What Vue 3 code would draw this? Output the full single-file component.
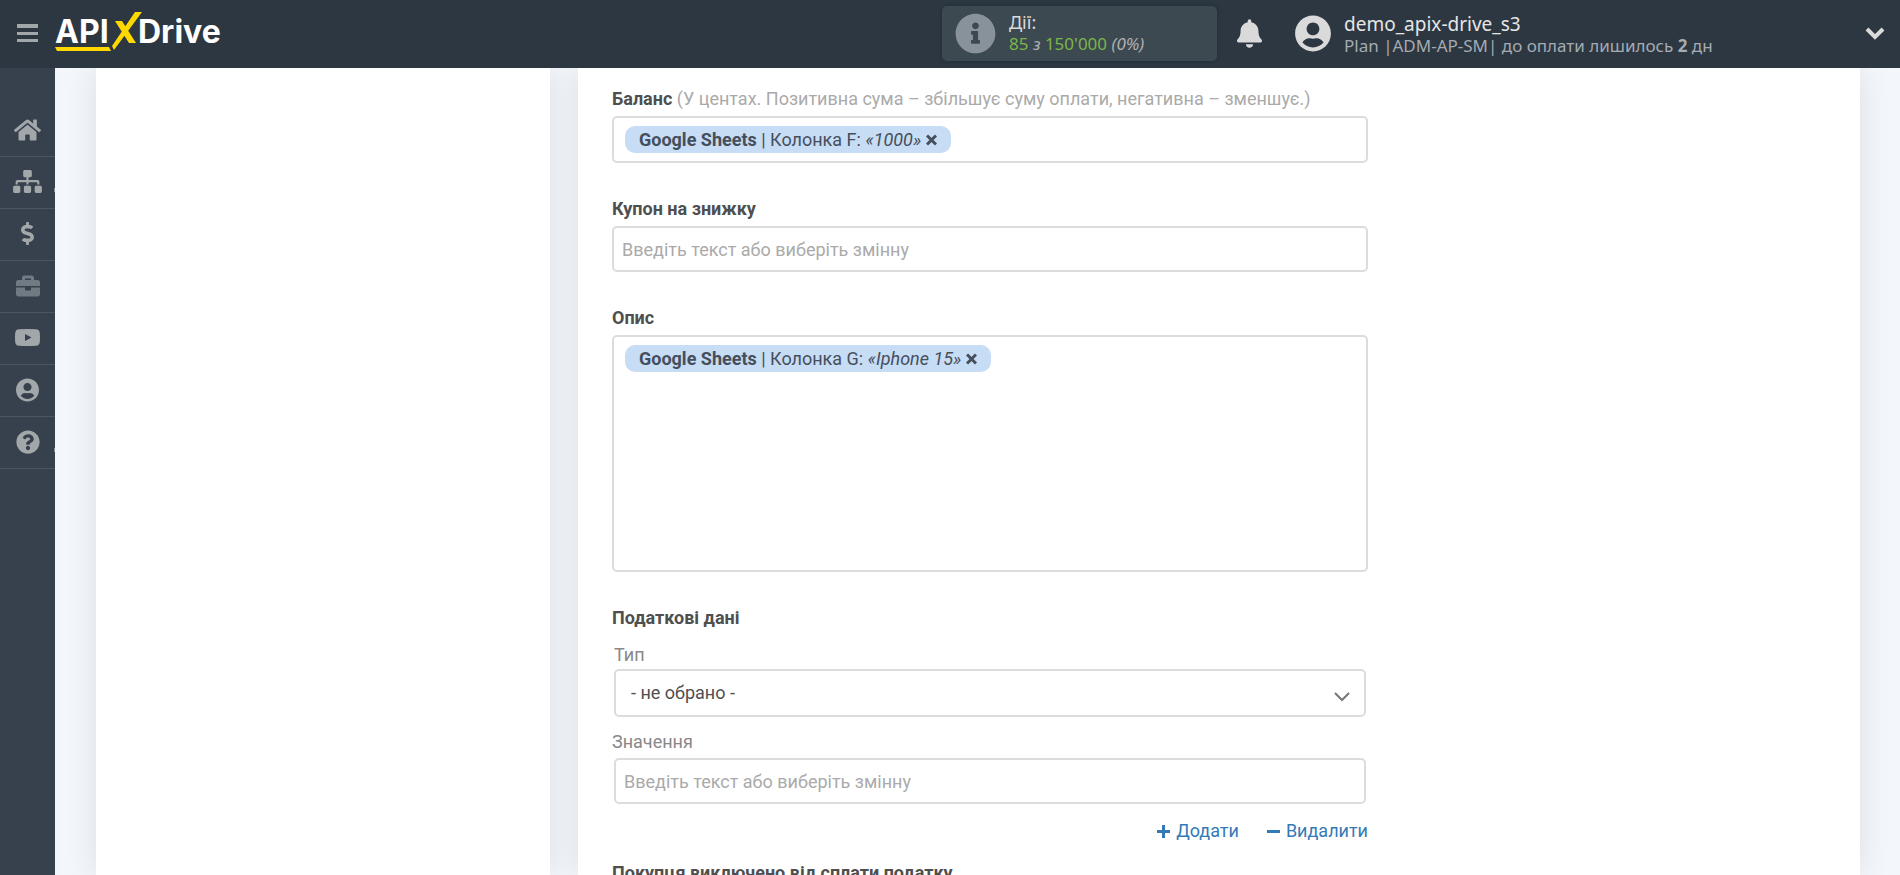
<script setup>
import { ref } from 'vue'

const userPath = 'M248 8C111 8 0 119 0 256s111 248 248 248 248-111 248-248S385 8 248 8zm0 96c48.6 0 88 39.4 88 88s-39.4 88-88 88-88-39.4-88-88 39.4-88 88-88zm0 344c-58.7 0-111.3-26.6-146.5-68.2 18.8-35.4 55.6-59.8 98.5-59.8 2.4 0 4.8.4 7.1 1.1 13 4.2 26.6 6.9 40.9 6.9 14.3 0 28-2.7 40.9-6.9 2.3-.7 4.7-1.1 7.1-1.1 42.9 0 79.7 24.4 98.5 59.8C359.3 421.4 306.7 448 248 448z'

const nav = [
  { name: 'Головна', box: '0 0 576 512', w: 27, h: 24, path: 'M280.37 148.26L96 300.11V464a16 16 0 0 0 16 16l112.06-.29a16 16 0 0 0 15.92-16V368a16 16 0 0 1 16-16h64a16 16 0 0 1 16 16v95.64a16 16 0 0 0 16 16.05L464 480a16 16 0 0 0 16-16V300L295.67 148.26a12.19 12.19 0 0 0-15.3 0zM571.6 251.47L488 182.56V44.05a12 12 0 0 0-12-12h-56a12 12 0 0 0-12 12v72.61L318.47 43a48 48 0 0 0-61 0L4.34 251.47a12 12 0 0 0-1.6 16.9l25.5 31A12 12 0 0 0 45.15 301l235.22-193.74a12.19 12.19 0 0 1 15.3 0L530.9 301a12 12 0 0 0 16.9-1.6l25.5-31a12 12 0 0 0-1.7-16.93z' },
  { name: "Зв'язки", box: '0 0 640 512', w: 29, h: 23, sub: true, path: 'M128 352H32c-17.67 0-32 14.33-32 32v96c0 17.67 14.33 32 32 32h96c17.67 0 32-14.33 32-32v-96c0-17.67-14.33-32-32-32zm-24-80h192v48h48v-48h192v48h48v-57.59c0-21.17-17.23-38.41-38.41-38.41H344v-64h40c17.67 0 32-14.33 32-32V32c0-17.67-14.33-32-32-32H256c-17.67 0-32 14.33-32 32v96c0 17.67 14.33 32 32 32h40v64H94.41C73.23 224 56 241.23 56 262.41V320h48v-48zm264 80h-96c-17.67 0-32 14.33-32 32v96c0 17.67 14.33 32 32 32h96c17.67 0 32-14.33 32-32v-96c0-17.67-14.33-32-32-32zm240 0h-96c-17.67 0-32 14.33-32 32v96c0 17.67 14.33 32 32 32h96c17.67 0 32-14.33 32-32v-96c0-17.67-14.33-32-32-32z' },
  { name: 'Оплата', box: '0 0 288 512', w: 13, h: 23, path: 'M209.2 233.4l-108-31.6C88.7 198.2 80 186.5 80 173.5c0-16.3 13.2-29.5 29.5-29.5h66.3c12.2 0 24.2 3.7 34.2 10.5 6.1 4.1 14.3 3.1 19.5-2l34.8-34c7.1-6.9 6.1-18.4-1.8-24.5C238 74.8 207.4 64.1 176 64V16c0-8.8-7.2-16-16-16h-32c-8.8 0-16 7.2-16 16v48h-2.5C45.8 64-5.4 118.7.5 183.6c4.2 46.1 39.4 83.6 83.8 96.6l102.5 30c12.5 3.7 21.2 15.3 21.2 28.3 0 16.3-13.2 29.5-29.5 29.5h-66.3C100 368 88 364.3 78 357.5c-6.1-4.1-14.3-3.1-19.5 2l-34.8 34c-7.1 6.9-6.1 18.4 1.8 24.5 24.5 19.2 55.1 29.9 86.5 30v48c0 8.8 7.2 16 16 16h32c8.8 0 16-7.2 16-16v-48.2c46.6-.9 90.3-28.6 105.7-72.7 21.5-61.6-14.6-124.8-72.5-141.7z' },
  { name: 'Послуги', box: '0 0 512 512', w: 24, h: 24, dim: true, path: 'M320 336c0 8.84-7.16 16-16 16h-96c-8.84 0-16-7.16-16-16v-48H0v144c0 25.6 22.4 48 48 48h416c25.6 0 48-22.4 48-48V288H320v48zm144-208h-80V80c0-25.6-22.4-48-48-48H176c-25.6 0-48 22.4-48 48v48H48c-25.6 0-48 22.4-48 48v80h512v-80c0-25.6-22.4-48-48-48zm-144 0H192V96h128v32z' },
  { name: 'Відео', box: '0 0 25 17', w: 25, h: 17, path: 'M4 .3Q12.500-.3 21 .3 24.500.5 24.800 4 25.200 8.500 24.800 13 24.500 16.500 21 16.700 12.500 17.300 4 16.700.5 16.500.2 13-.2 8.500.2 4 .5.500 4 .3zM10 5v7l6.500-3.500z' },
  { name: 'Профіль', box: '0 0 496 512', w: 23, h: 24, path: userPath },
  { name: 'Допомога', box: '0 0 512 512', w: 24, h: 24, sub: true, path: 'M504 256c0 136.997-111.043 248-248 248S8 392.997 8 256C8 119.083 119.043 8 256 8s248 111.083 248 248zM262.655 90c-54.497 0-89.255 22.957-116.549 63.758-3.536 5.286-2.353 12.415 2.715 16.258l34.699 26.31c5.205 3.947 12.621 3.008 16.665-2.122 17.864-22.658 30.113-35.797 57.303-35.797 20.429 0 45.698 13.148 45.698 32.958 0 14.976-12.363 22.667-32.534 33.976C247.128 238.528 216 254.941 216 296v4c0 6.627 5.373 12 12 12h56c6.627 0 12-5.373 12-12v-1.333c0-28.462 83.186-29.647 83.186-106.667 0-58.002-60.165-102-116.531-102zM256 338c-25.365 0-46 20.635-46 46 0 25.364 20.635 46 46 46s46-20.636 46-46c0-25.365-20.635-46-46-46z' },
]

const balanceTag = ref(true)
const descriptionTag = ref(true)
const coupon = ref('')
const value = ref('')
const type = ref('none')
</script>

<template>
  <div class="page">
    <header class="topbar">
      <button class="menu" aria-label="Меню">
        <svg width="21" height="19" viewBox="0 0 21 19"><path d="M0 0h21v4H0zM0 8h21v3H0zM0 15h21v3H0z" fill="#a2a7aa" /></svg>
      </button>
      <a class="logo" href="#" aria-label="APIXDrive">
        <svg width="170" height="42" viewBox="0 0 170 42">
          <text x="0" y="31" class="logo-text">API</text>
          <path d="M0 35h54l2 4H2z" fill="#ffd800" />
          <path d="M60 9h7l14 22h-7zM80 0h7L59 38l-2-4z" fill="#ffd800" />
          <text x="83" y="31" class="logo-text">Drive</text>
        </svg>
      </a>
      <div class="actions">
        <svg width="41" height="41" viewBox="0 0 512 512" fill="#8a9299"><path d="M256 8C119.043 8 8 119.083 8 256c0 136.997 111.043 248 248 248s248-111.003 248-248C504 119.083 392.957 8 256 8zm0 110c23.196 0 42 18.804 42 42s-18.804 42-42 42-42-18.804-42-42 18.804-42 42-42zm56 254c0 6.627-5.373 12-12 12h-88c-6.627 0-12-5.373-12-12v-24c0-6.627 5.373-12 12-12h12v-64h-12c-6.627 0-12-5.373-12-12v-24c0-6.627 5.373-12 12-12h64c6.627 0 12 5.373 12 12v100h12c6.627 0 12 5.373 12 12v24z" /></svg>
        <div>
          <div class="actions-title">Дії:</div>
          <div class="actions-count"><b>85</b> <i>з</i> <b>150'000</b> <i>(0%)</i></div>
        </div>
      </div>
      <button class="bell" aria-label="Сповіщення">
        <svg width="25" height="29" viewBox="0 0 448 512" fill="#dadada"><path d="M224 512c35.32 0 63.97-28.65 63.97-64H160.03c0 35.35 28.65 64 63.97 64zm215.39-149.71c-19.32-20.76-55.47-51.99-55.47-154.29 0-77.7-54.48-139.9-127.94-155.16V32c0-17.67-14.32-32-31.98-32s-31.98 14.33-31.98 32v20.84C118.56 68.1 64.08 130.3 64.08 208c0 102.3-36.15 133.53-55.47 154.29-6 6.45-8.66 14.16-8.61 21.71.11 16.4 12.98 32 32.1 32h383.8c19.12 0 32-15.6 32.1-32 .05-7.55-2.61-15.27-8.61-21.71z" /></svg>
      </button>
      <div class="user">
        <svg width="36" height="37" viewBox="0 0 496 512" fill="#dadada"><path :d="userPath" /></svg>
        <div class="user-text">
          <div class="user-name">demo_apix-drive_s3</div>
          <div class="user-plan">Plan |ADM-AP-SM| до оплати лишилось <b>2</b> дн</div>
        </div>
        <button class="expand" aria-label="Розгорнути">
          <svg width="20" height="14" viewBox="0 0 20 14" fill="none" stroke="#dadada" stroke-width="4"><path d="M2 3l8 8 8-8" /></svg>
        </button>
      </div>
    </header>

    <div class="body">
      <nav class="sidebar">
        <a v-for="item in nav" :key="item.name" href="#" :aria-label="item.name" :class="{ dim: item.dim, sub: item.sub }">
          <svg :width="item.w" :height="item.h" :viewBox="item.box" fill="currentColor" fill-rule="evenodd"><path :d="item.path" /></svg>
        </a>
      </nav>
      <main class="content">
        <section class="card side"></section>
        <section class="card main">
          <form class="form" @submit.prevent>
            <div class="field">
              <label for="balance">Баланс <span>(У центах. Позитивна сума – збільшує суму оплати, негативна – зменшує.)</span></label>
              <div class="box tagbox">
                <span v-if="balanceTag" class="tag">
                  <span><b>Google Sheets</b> | Колонка F: <i>«1000»</i></span>
                  <button type="button" aria-label="Прибрати" @click="balanceTag = false"><svg width="11" height="12" viewBox="0 0 11 12" stroke="#454f5b" stroke-width="3"><path d="M1 1.500l9 9M10 1.500l-9 9" /></svg></button>
                </span>
                <input id="balance" type="text">
              </div>
            </div>
            <div class="field">
              <label for="coupon">Купон на знижку</label>
              <input id="coupon" v-model="coupon" class="box text" type="text" placeholder="Введіть текст або виберіть змінну">
            </div>
            <div class="field">
              <label for="description">Опис</label>
              <div class="box tagbox tall">
                <span v-if="descriptionTag" class="tag">
                  <span><b>Google Sheets</b> | Колонка G: <i>«Iphone 15»</i></span>
                  <button type="button" aria-label="Прибрати" @click="descriptionTag = false"><svg width="11" height="12" viewBox="0 0 11 12" stroke="#454f5b" stroke-width="3"><path d="M1 1.500l9 9M10 1.500l-9 9" /></svg></button>
                </span>
                <textarea id="description"></textarea>
              </div>
            </div>
            <fieldset class="group">
              <legend>Податкові дані</legend>
              <label for="type" class="type-label">Тип</label>
              <div class="select">
                <select id="type" v-model="type" class="box">
                  <option value="none">- не обрано -</option>
                </select>
                <svg width="16" height="10" viewBox="0 0 16 10" fill="none" stroke="#777" stroke-width="2"><path d="M1 1l7 7 7-7" /></svg>
              </div>
              <label for="value" class="value-label">Значення</label>
              <input id="value" v-model="value" class="box text" type="text" placeholder="Введіть текст або виберіть змінну">
              <div class="links">
                <a href="#"><svg width="13" height="13" viewBox="0 0 13 13" stroke="currentColor" stroke-width="3"><path d="M0 6.500h13M6.500 0v13" /></svg>Додати</a>
                <a href="#"><svg width="13" height="13" viewBox="0 0 13 13" stroke="currentColor" stroke-width="3"><path d="M0 6.500h13" /></svg>Видалити</a>
              </div>
            </fieldset>
            <div class="field">
              <label for="exempt">Покупця виключено від сплати податку</label>
              <input id="exempt" class="box text" type="text">
            </div>
          </form>
        </section>
      </main>
    </div>
  </div>
</template>

<style>
body {
  margin: 0;
}
</style>

<style scoped>
* {
  box-sizing: border-box;
}
button {
  display: flex;
  align-items: center;
  justify-content: center;
  padding: 0;
  border: 0;
  background: none;
  cursor: pointer;
}
svg {
  flex: none;
}
.page {
  display: flex;
  flex-direction: column;
  height: 100vh;
  overflow: hidden;
  background: #f3f6fb;
  font-family: Roboto, "Noto Sans", sans-serif;
  font-size: 18px;
  line-height: 24px;
  color: #4f4f4f;
}
.topbar {
  display: flex;
  flex: none;
  align-items: center;
  height: 68px;
  padding-bottom: 2px;
  background: #2c3742;
  font-family: "Noto Sans", sans-serif;
}
.menu {
  width: 55px;
  height: 66px;
}
.logo {
  display: flex;
}
.logo-text {
  font-family: Inter, sans-serif;
  font-size: 32px;
  font-weight: 700;
  fill: #fff;
}
.actions {
  display: flex;
  gap: 13px;
  align-items: center;
  width: 275px;
  height: 55px;
  margin-left: auto;
  padding-left: 13px;
  border-radius: 5px;
  background: #3c4951;
  box-shadow: 0 0 4px rgba(0, 0, 0, 0.2);
}
.actions-title {
  font-size: 18px;
  line-height: 22px;
  color: #dadada;
}
.actions-count {
  font-size: 17px;
  line-height: 22px;
  color: #b0b0b0;
}
.actions-count b {
  font-weight: 400;
  color: #7ab648;
}
.bell {
  margin: 0 33px 0 20px;
}
.user {
  display: flex;
  gap: 13px;
  align-items: center;
  width: 605px;
  padding-right: 15px;
}
.user-text {
  padding-top: 4px;
}
.user-name {
  font-size: 19px;
  line-height: 22px;
  color: #e6e6e6;
}
.user-plan {
  font-size: 17px;
  line-height: 22px;
  color: #a5abb0;
  white-space: nowrap;
}
.expand {
  margin-left: auto;
}
.body {
  display: flex;
  flex: 1;
  min-height: 0;
}
.sidebar {
  flex: none;
  width: 55px;
  padding-top: 37px;
  background: #36414d;
}
.sidebar a {
  position: relative;
  display: flex;
  align-items: center;
  justify-content: center;
  height: 52px;
  padding-bottom: 2px;
  border-bottom: 1px solid #4c5763;
  color: #a2a7aa;
}
.sidebar .dim {
  color: #717a83;
}
.sidebar .sub::after {
  content: "";
  position: absolute;
  right: 0;
  bottom: 16px;
  width: 1px;
  height: 4px;
  background: #8a9299;
}
.content {
  display: flex;
  flex: 1;
  gap: 28px;
  min-width: 0;
  padding: 0 40px 0 41px;
  overflow: hidden;
}
.card {
  background: #fff;
  box-shadow: 0 0 30px rgba(0, 0, 0, 0.1);
}
.side {
  flex: 0 1 454px;
}
.main {
  flex: 1;
  padding: 19px 34px 0;
}
.form {
  display: flex;
  flex-direction: column;
  gap: 34px;
  max-width: 756px;
}
.field {
  display: flex;
  flex-direction: column;
  gap: 5px;
}
.field label,
legend {
  font-weight: 700;
}
.field label span {
  font-weight: 400;
  color: #aaa;
}
.box {
  width: 100%;
  border: 2px solid #dcdcdc;
  border-radius: 5px;
  background: #fff;
  font: inherit;
  color: #4f4f4f;
  outline: 0;
}
.text {
  height: 46px;
  padding: 0 8px;
}
.text::placeholder {
  color: #aaa;
  opacity: 1;
}
.tagbox {
  display: flex;
  gap: 8px;
  align-items: flex-start;
  min-height: 47px;
  padding: 8px 11px;
}
.tall {
  min-height: 237px;
}
.tag {
  display: flex;
  gap: 5px;
  align-items: center;
  height: 27px;
  padding: 0 14px;
  border-radius: 10px;
  background: #c7dcf5;
  color: #454f5b;
  white-space: nowrap;
}
.tagbox input,
.tagbox textarea {
  flex: 1;
  min-width: 0;
  height: 27px;
  padding: 0;
  border: 0;
  background: none;
  font: inherit;
  outline: 0;
  resize: none;
}
.group {
  display: flex;
  flex-direction: column;
  margin: 0 0 -16px;
  padding: 0;
  border: 0;
  min-width: 0;
}
legend {
  padding: 0;
  margin-bottom: 13px;
}
.group label {
  color: #888;
}
.type-label {
  padding: 0 2px 2px;
}
.value-label {
  padding: 13px 0 4px;
}
.group .text,
.select {
  width: auto;
  margin: 0 2px;
}
.select {
  position: relative;
}
.select select {
  display: block;
  height: 48px;
  padding: 0 15px;
  appearance: none;
}
.select svg {
  position: absolute;
  top: 23px;
  right: 16px;
  pointer-events: none;
}
.links {
  display: flex;
  gap: 28px;
  justify-content: flex-end;
  margin-top: 15px;
}
.links a {
  display: flex;
  gap: 6px;
  align-items: center;
  color: #337ab7;
  text-decoration: none;
}
</style>
